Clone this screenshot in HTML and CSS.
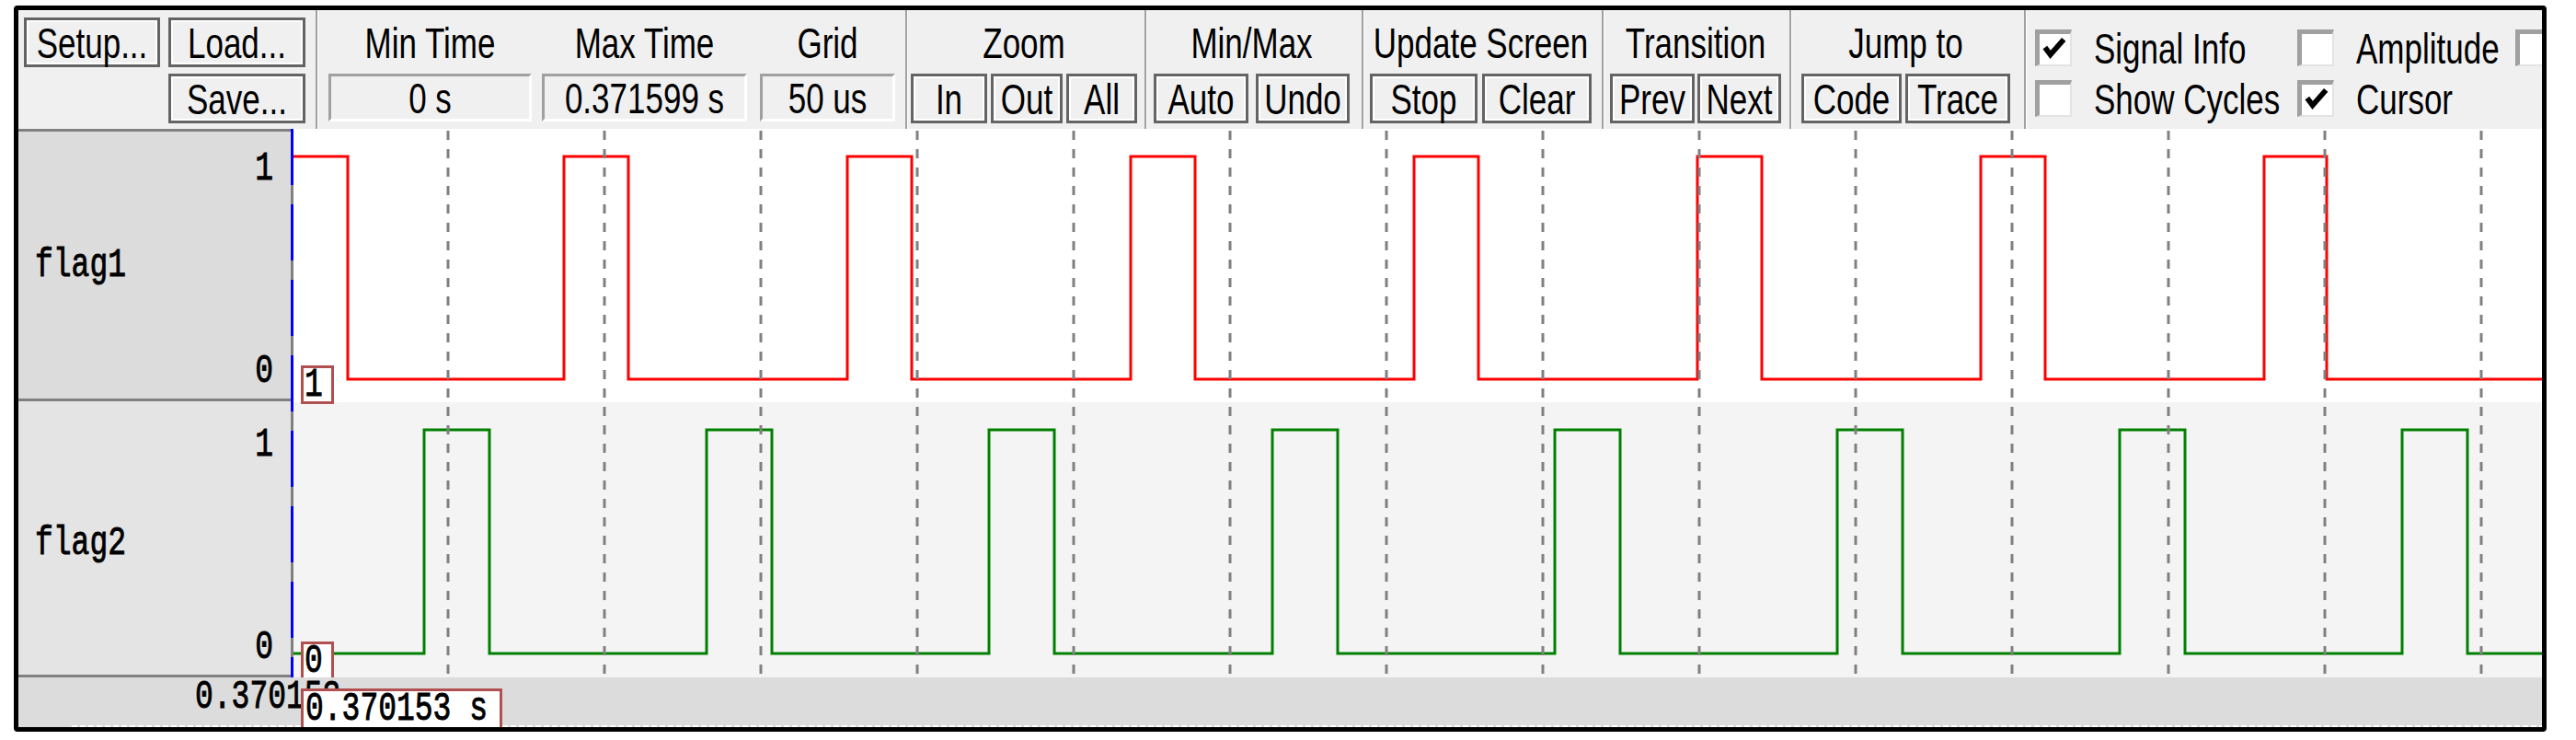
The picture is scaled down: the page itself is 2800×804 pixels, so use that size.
FILE: index.html
```html
<!DOCTYPE html>
<html lang="en">
<head>
<meta charset="utf-8">
<title>Logic Analyzer</title>
<link rel="stylesheet" href="styles.css">
</head>
<body>
<div class="frame">
  <div class="toolbar">
    <div class="grp-file">
      <div class="btn b-setup"><span class="t">Setup...</span></div>
      <div class="btn b-load"><span class="t">Load...</span></div>
      <div class="spacer"></div>
      <div class="btn b-load"><span class="t">Save...</span></div>
    </div>
    <div class="sep"></div>
    <div class="grp-times">
      <div class="field f-min">
        <div class="lbl"><span class="t">Min Time</span></div>
        <div class="val"><span class="t">0 s</span></div>
      </div>
      <div class="field f-max">
        <div class="lbl"><span class="t">Max Time</span></div>
        <div class="val"><span class="t">0.371599 s</span></div>
      </div>
      <div class="field f-grid">
        <div class="lbl"><span class="t">Grid</span></div>
        <div class="val"><span class="t">50 us</span></div>
      </div>
    </div>
    <div class="sep"></div>
    <div class="grp g-zoom">
      <div class="lbl"><span class="t">Zoom</span></div>
      <div class="btns">
        <div class="btn b-in"><span class="t">In</span></div>
        <div class="btn b-out"><span class="t">Out</span></div>
        <div class="btn b-all"><span class="t">All</span></div>
      </div>
    </div>
    <div class="sep"></div>
    <div class="grp g-minmax">
      <div class="lbl"><span class="t">Min/Max</span></div>
      <div class="btns">
        <div class="btn b-auto"><span class="t">Auto</span></div>
        <div class="btn b-undo"><span class="t">Undo</span></div>
      </div>
    </div>
    <div class="sep"></div>
    <div class="grp g-update">
      <div class="lbl"><span class="t">Update Screen</span></div>
      <div class="btns">
        <div class="btn b-stop"><span class="t">Stop</span></div>
        <div class="btn b-clear"><span class="t">Clear</span></div>
      </div>
    </div>
    <div class="sep"></div>
    <div class="grp g-trans">
      <div class="lbl"><span class="t">Transition</span></div>
      <div class="btns">
        <div class="btn b-prev"><span class="t">Prev</span></div>
        <div class="btn b-next"><span class="t">Next</span></div>
      </div>
    </div>
    <div class="sep"></div>
    <div class="grp g-jump">
      <div class="lbl"><span class="t">Jump to</span></div>
      <div class="btns">
        <div class="btn b-code"><span class="t">Code</span></div>
        <div class="btn b-trace"><span class="t">Trace</span></div>
      </div>
    </div>
    <div class="sep"></div>
    <div class="checks">
      <div class="chk"><span class="box"><svg class="tick" viewBox="0 0 34 34"><polyline points="6,15 12,23 27,6"/></svg></span><span class="t">Signal Info</span></div>
      <div class="chk"><span class="box"></span><span class="t">Amplitude</span></div>
      <div class="chk"><span class="box"></span></div>
      <div class="chk"><span class="box"></span><span class="t">Show Cycles</span></div>
      <div class="chk"><span class="box"><svg class="tick" viewBox="0 0 34 34"><polyline points="6,15 12,23 27,6"/></svg></span><span class="t">Cursor</span></div>
    </div>
  </div>

  <div class="main">
    <div class="labels">
      <div class="lrow r1">
        <span class="m name">flag1</span>
        <div class="vals"><span class="m">1</span><span class="m">0</span></div>
      </div>
      <div class="lrow r2">
        <span class="m name">flag2</span>
        <div class="vals"><span class="m">1</span><span class="m">0</span></div>
      </div>
    </div>
    <div class="cursor"></div>
    <div class="wave">
      <div class="wrow w1"></div>
      <div class="wrow w2"></div>
      <svg class="plot" width="2444" height="596" viewBox="0 0 2444 596">
        <path class="sig-red" d="M0,30 H59 V272 H294 V30 H364 V272 H602 V30 H672 V272 H910 V30 H980 V272 H1218 V30 H1288 V272 H1526 V30 H1596 V272 H1834 V30 H1904 V272 H2142 V30 H2210 V272 H2444"/>
        <path class="sig-green" d="M0,570 H142 V327 H213 V570 H449 V327 H520 V570 H756 V327 H827 V570 H1064 V327 H1135 V570 H1371 V327 H1442 V570 H1678 V327 H1749 V570 H1985 V327 H2056 V570 H2292 V327 H2363 V570 H2444"/>
        <g class="gridlines">
          <line x1="168" y1="2" x2="168" y2="596"/>
          <line x1="338" y1="2" x2="338" y2="596"/>
          <line x1="508" y1="2" x2="508" y2="596"/>
          <line x1="678" y1="2" x2="678" y2="596"/>
          <line x1="848" y1="2" x2="848" y2="596"/>
          <line x1="1018" y1="2" x2="1018" y2="596"/>
          <line x1="1188" y1="2" x2="1188" y2="596"/>
          <line x1="1358" y1="2" x2="1358" y2="596"/>
          <line x1="1528" y1="2" x2="1528" y2="596"/>
          <line x1="1698" y1="2" x2="1698" y2="596"/>
          <line x1="1868" y1="2" x2="1868" y2="596"/>
          <line x1="2038" y1="2" x2="2038" y2="596"/>
          <line x1="2208" y1="2" x2="2208" y2="596"/>
          <line x1="2378" y1="2" x2="2378" y2="596"/>
        </g>
      </svg>
      <div class="tag tag1"><span class="m">1</span></div>
      <div class="tag tag0"><span class="m">0</span></div>
    </div>
  </div>

  <div class="timebar">
    <span class="m tleft">0.370153</span>
    <div class="tbox"><span class="m">0.370153 s</span></div>
  </div>
</div>
</body>
</html>
```

FILE: styles.css
```css
* { box-sizing: border-box; margin: 0; padding: 0; }
html, body { background: #fff; }
body {
  width: 2800px;
  height: 804px;
  overflow: hidden;
  font-family: "Liberation Sans", Arial, sans-serif;
  color: #000;
}

.frame {
  margin: 6px 0 0 15px;
  width: 2753px;
  height: 789px;
  border: 5px solid #000;
  border-radius: 4px;
  overflow: hidden;
  display: flex;
  flex-direction: column;
  background: #f0f0f0;
}

/* ---------- toolbar ---------- */
.toolbar {
  flex: none;
  height: 129px;
  display: flex;
  align-items: stretch;
  background: #f0f0f0;
  padding-left: 6px;
  white-space: nowrap;
}

.t {
  display: inline-block;
  font-size: 35px;
  line-height: 35px;
  transform: scaleY(1.33);
  white-space: nowrap;
}

.sep {
  flex: none;
  width: 3px;
  background: linear-gradient(to right, #a0a0a0 0 2px, #ffffff 2px 3px);
}

.btn {
  height: 54px;
  border: 3px solid #646464;
  box-shadow: inset 0 0 0 2px #fff;
  background: #f0f0f0;
  display: flex;
  align-items: center;
  justify-content: center;
  flex: none;
}

.grp-file {
  display: grid;
  grid-template-columns: 148px 149px;
  grid-template-rows: 54px 54px;
  column-gap: 9px;
  row-gap: 7px;
  padding-top: 8px;
  margin-right: 11px;
}

.grp-times {
  display: flex;
  padding: 0 11px;
  gap: 11px;
}
.field {
  display: flex;
  flex-direction: column;
  padding-top: 8px;
  row-gap: 7px;
}
.f-min { width: 221px; }
.f-max { width: 223px; margin-right: 3px; }
.f-grid { width: 147px; }

.lbl {
  height: 54px;
  display: flex;
  align-items: center;
  justify-content: center;
}
.val {
  height: 52px;
  border-style: solid;
  border-width: 3px;
  border-color: #a0a0a0 #fff #fff #a0a0a0;
  background: #f0f0f0;
  display: flex;
  align-items: center;
  justify-content: center;
}

.grp {
  display: flex;
  flex-direction: column;
  padding-top: 8px;
  row-gap: 7px;
}
.btns { display: flex; height: 54px; }

.g-zoom { padding-left: 3px; padding-right: 8px; }
.g-zoom .btns { gap: 4px; }
.b-in { width: 83px; }
.b-out { width: 78px; }
.b-all { width: 77px; }

.g-minmax { padding-left: 7px; padding-right: 13px; }
.g-minmax .btns { gap: 8px; }
.b-auto { width: 103px; }
.b-undo { width: 102px; }

.g-update { padding-left: 6px; padding-right: 11px; }
.g-update .btns { gap: 5px; }
.b-stop { width: 117px; }
.b-clear { width: 119px; }

.g-trans { padding-left: 6px; padding-right: 9px; }
.g-trans .btns { gap: 3px; }
.b-prev { width: 92px; }
.b-next { width: 91px; }

.g-jump { padding-left: 10px; padding-right: 15px; }
.g-jump .btns { gap: 4px; }
.b-code { width: 109px; }
.b-trace { width: 114px; }

.checks {
  display: grid;
  grid-template-columns: 285px 237px 40px;
  grid-template-rows: 54px 54px;
  row-gap: 1px;
  padding-top: 14px;
  padding-left: 9px;
}
.chk {
  display: flex;
  align-items: center;
  gap: 24px;
}
.box {
  flex: none;
  width: 40px;
  height: 40px;
  background: #fff;
  border-style: solid;
  border-width: 5px 2px 2px 5px;
  border-color: #a0a0a0 #e3e3e3 #e3e3e3 #a0a0a0;
  display: block;
}
.tick {
  display: block;
  width: 33px;
  height: 33px;
}
.tick polyline {
  fill: none;
  stroke: #000;
  stroke-width: 6;
}

/* ---------- signals ---------- */
.main {
  flex: none;
  height: 596px;
  display: flex;
}
.m {
  display: inline-block;
  font-family: "Liberation Mono", "Courier New", monospace;
  font-weight: normal;
  -webkit-text-stroke: 0.7px #000;
  font-size: 33px;
  line-height: 33px;
  transform: scaleY(1.35);
  white-space: pre;
}

.labels {
  flex: none;
  width: 296px;
  display: flex;
  flex-direction: column;
}
.lrow {
  display: flex;
  justify-content: space-between;
  padding-left: 18px;
  padding-right: 19px;
}
.r1 {
  height: 296px;
  background: #dcdcdc;
  border-top: 3px solid #808080;
  border-bottom: 3px solid #808080;
}
.r2 {
  height: 300px;
  background: #e4e4e4;
  border-bottom: 3px solid #808080;
}
.name { align-self: center; }
.r2 .name { margin-top: 12px; }
.vals {
  display: flex;
  flex-direction: column;
  justify-content: space-between;
  align-items: flex-end;
}
.r1 .vals { padding-top: 24px; padding-bottom: 13px; }
.r2 .vals { padding-top: 31px; padding-bottom: 13px; }

.cursor {
  flex: none;
  width: 3px;
  background: repeating-linear-gradient(to bottom, #0000ff 0 61px, #808080 61px 82px);
}

.wave {
  flex: 1;
  position: relative;
  display: flex;
  flex-direction: column;
}
.w1 { height: 297px; background: #ffffff; }
.w2 { flex: 1; background: #f4f4f4; }

.plot {
  position: absolute;
  left: 0;
  top: 0;
}
.sig-red { fill: none; stroke: #ff0000; stroke-width: 3; }
.sig-green { fill: none; stroke: #008000; stroke-width: 3; }
.gridlines line {
  stroke: #808080;
  stroke-width: 3;
  stroke-dasharray: 10 10;
}

.tag {
  position: absolute;
  left: 8px;
  width: 36px;
  height: 42px;
  border: 3px solid #b05050;
  background: #fff;
  padding: 2px 0 0 1px;
}
.tag1 { top: 257px; }
.tag0 { top: 557px; }

/* ---------- time bar ---------- */
.timebar {
  flex: none;
  height: 54px;
  position: relative;
  background: #dcdcdc;
  padding: 5px 0 0 192px;
}
.timebar::after {
  content: "";
  position: absolute;
  left: 58px;
  right: 0;
  bottom: 0;
  height: 2px;
  background: repeating-linear-gradient(to right, #ffffff 0 6px, transparent 6px 9px);
}
.tbox {
  position: absolute;
  left: 307px;
  top: 12px;
  width: 219px;
  height: 60px;
  border: 3px solid #b05050;
  background: #fff;
  padding: 3px 0 0 2px;
  z-index: 1;
}
```
